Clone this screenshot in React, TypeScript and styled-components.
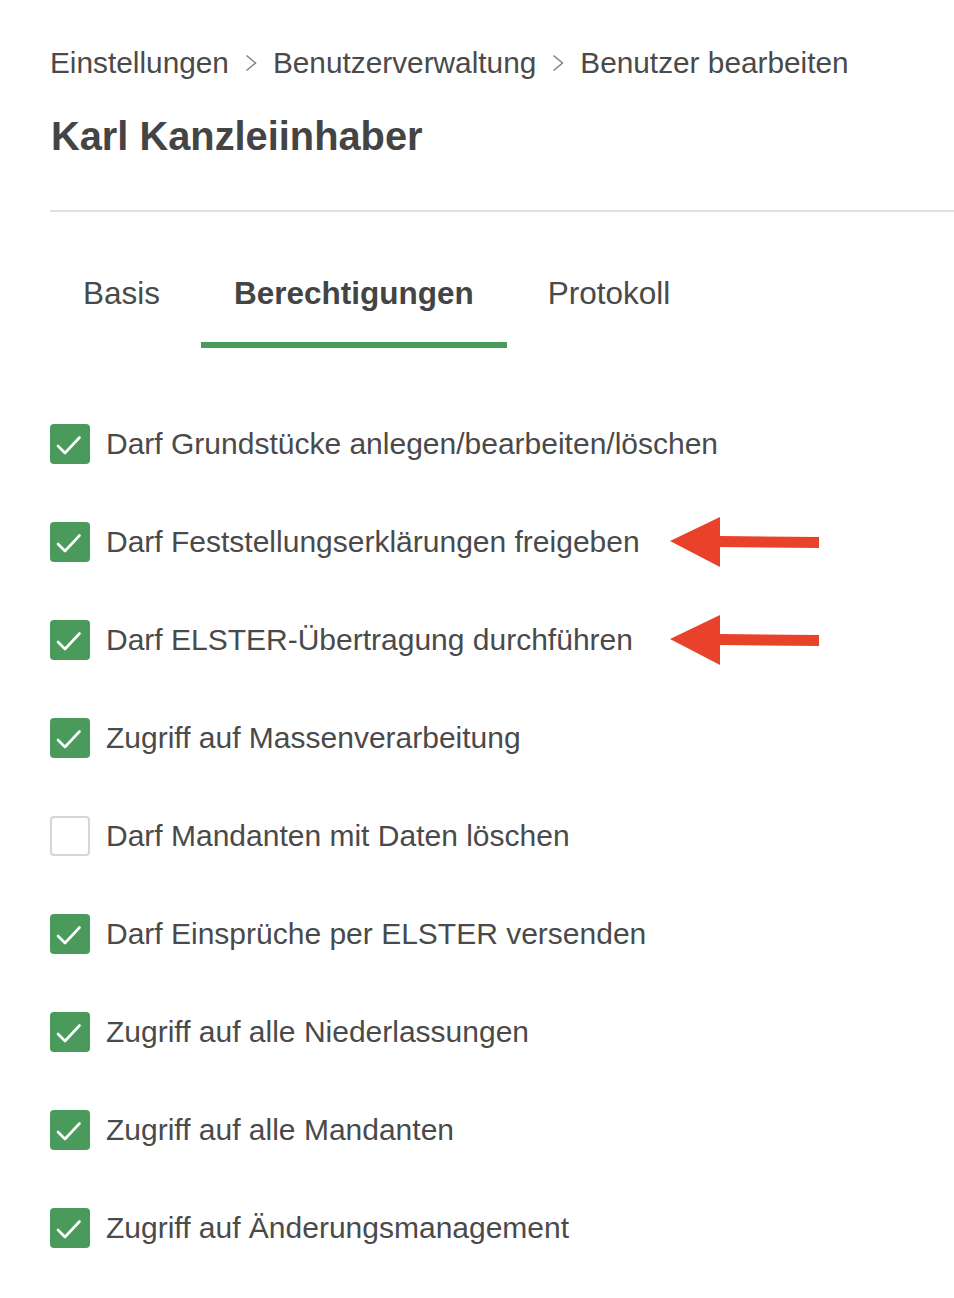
import React from "react";
import styled, { createGlobalStyle } from "styled-components";

const GlobalStyle = createGlobalStyle`
    html, body {
        margin: 0;
        padding: 0;
        background: #fff;
    }
    body {
        font-family: "Liberation Sans", Arial, Helvetica, sans-serif;
        color: #4a4a4a;
    }
`;

interface Permission {
    label: string;
    checked: boolean;
    marked?: boolean;
}

const permissions: Permission[] = [
    { label: "Darf Grundstücke anlegen/bearbeiten/löschen", checked: true },
    { label: "Darf Feststellungserklärungen freigeben", checked: true, marked: true },
    { label: "Darf ELSTER-Übertragung durchführen", checked: true, marked: true },
    { label: "Zugriff auf Massenverarbeitung", checked: true },
    { label: "Darf Mandanten mit Daten löschen", checked: false },
    { label: "Darf Einsprüche per ELSTER versenden", checked: true },
    { label: "Zugriff auf alle Niederlassungen", checked: true },
    { label: "Zugriff auf alle Mandanten", checked: true },
    { label: "Zugriff auf Änderungsmanagement", checked: true },
];

const tabs = ["Basis", "Berechtigungen", "Protokoll"];

const Page = styled.div`
    padding: 45px 0 40px 50px;
`;

const Breadcrumb = styled.nav`
    display: flex;
    align-items: center;
    gap: 16px;
    font-size: 29.8px;
    line-height: 36px;
`;

const Crumb = styled.span`
    color: #4a4a4a;
`;

const Title = styled.h1`
    margin: 31px 0 0 1px;
    font-size: 39.8px;
    line-height: 48px;
    font-weight: 700;
    color: #444;
`;

const Divider = styled.hr`
    margin: 50px 0 0 0;
    border: 0;
    height: 2px;
    background: #e0e0e0;
`;

const TabList = styled.div`
    display: flex;
    gap: 8px;
    margin-top: 61px;
`;

const Tab = styled.div<{ $active?: boolean }>`
    padding: 0 33px 29px;
    font-size: 31.5px;
    line-height: 40px;
    font-weight: ${(p) => (p.$active ? 700 : 400)};
    color: ${(p) => (p.$active ? "#444" : "#4a4a4a")};
    border-bottom: 6px solid ${(p) => (p.$active ? "#4a9a5b" : "transparent")};
`;

const List = styled.div`
    margin-top: 47px;
    display: flex;
    flex-direction: column;
`;

const Row = styled.label`
    position: relative;
    display: flex;
    align-items: center;
    gap: 16px;
    height: 98px;
    font-size: 30px;
`;

const Box = styled.span<{ $checked: boolean }>`
    box-sizing: border-box;
    width: 40px;
    height: 40px;
    border-radius: 4px;
    display: flex;
    align-items: center;
    justify-content: center;
    background: ${(p) => (p.$checked ? "#4a9a5b" : "#fff")};
    border: ${(p) => (p.$checked ? "none" : "2px solid #d6d6d6")};
    flex-shrink: 0;
`;

const Arrow = styled.svg`
    position: absolute;
    left: 620px;
    top: 24px;
`;

const Chevron = () => (
    <svg width="12" height="18" viewBox="0 0 12 18">
        <polyline points="1.5,1.5 10.5,9 1.5,16.5" fill="none" stroke="#808080" strokeWidth="1.5" />
    </svg>
);

const Check = () => (
    <svg width="40" height="40" viewBox="0 0 40 40">
        <polyline points="8,22 15,29 29.5,13.5" fill="none" stroke="#fff" strokeWidth="2.6" strokeLinecap="round" strokeLinejoin="round" />
    </svg>
);

const RedArrow = () => (
    <Arrow width="152" height="52" viewBox="0 0 152 52">
        <polygon points="0,24 50,0 50,19 149,20 149,31 50,30 50,50" fill="#e8432a" />
    </Arrow>
);

export default function App() {
    return (
        <>
            <GlobalStyle />
            <Page>
                <Breadcrumb>
                    <Crumb>Einstellungen</Crumb>
                    <Chevron />
                    <Crumb>Benutzerverwaltung</Crumb>
                    <Chevron />
                    <Crumb>Benutzer bearbeiten</Crumb>
                </Breadcrumb>
                <Title>Karl Kanzleiinhaber</Title>
                <Divider />
                <TabList>
                    {tabs.map((t) => (
                        <Tab key={t} $active={t === "Berechtigungen"}>{t}</Tab>
                    ))}
                </TabList>
                <List>
                    {permissions.map((p) => (
                        <Row key={p.label}>
                            <Box $checked={p.checked}>{p.checked ? <Check /> : null}</Box>
                            <span>{p.label}</span>
                            {p.marked ? <RedArrow /> : null}
                        </Row>
                    ))}
                </List>
            </Page>
        </>
    );
}
